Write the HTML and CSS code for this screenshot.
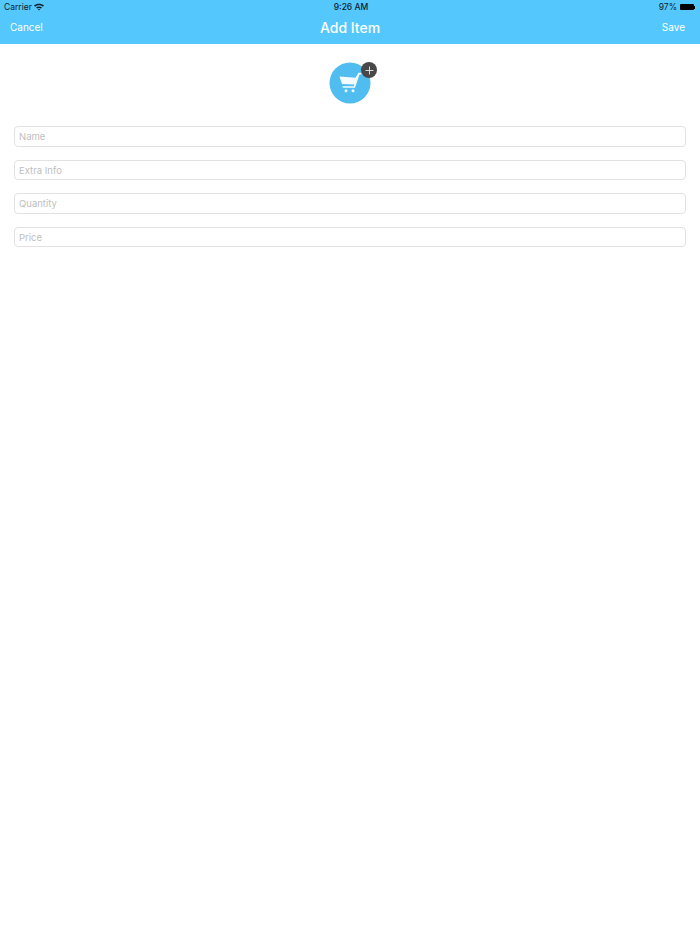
FILE: index.html
```html
<!DOCTYPE html>
<html lang="en">
<head>
    <meta charset="UTF-8">
    <meta name="viewport" content="width=device-width, initial-scale=1.0">
    <title>Add Item</title>
    <link rel="stylesheet" href="styles.css">
</head>
<body>

    <header class="barra">
        <div class="estado">
            <div class="estado-izq">
                <span>Carrier</span>
                <svg class="wifi" width="10" height="8" viewBox="0 0 10 8">
                    <path d="M0 2.6C2.8 0 7.2 0 10 2.6L8.9 3.8C6.7 1.8 3.3 1.8 1.1 3.8Z" fill="#10222c"/>
                    <path d="M2 4.5C3.7 3 6.3 3 8 4.5L6.9 5.6C5.8 4.7 4.2 4.7 3.1 5.6Z" fill="#10222c"/>
                    <path d="M3.9 6.3C4.6 5.8 5.4 5.8 6.1 6.3L5 7.6Z" fill="#10222c"/>
                </svg>
            </div>
            <div class="estado-hora">9:26 AM</div>
            <div class="estado-der">
                <span>97%</span>
                <div class="bateria"></div>
                <div class="bateria-punta"></div>
            </div>
        </div>
        <nav class="nav">
            <span class="nav-boton">Cancel</span>
            <h1 class="nav-titulo">Add Item</h1>
            <span class="nav-boton nav-boton-der">Save</span>
        </nav>
    </header>

    <main class="contenido">
        <div class="foto">
            <svg class="foto-icono" width="42" height="42" viewBox="0 0 42 42">
                <circle cx="21" cy="21" r="20.5" fill="#4fbdf0"/>
                <path d="M10.5 14.5L26.5 15.8L29.5 10.8H32.5V12.5H30.5L26 25.8H14L13.4 24.2H24.8L25.4 22.6L13 22Z" fill="#f4fbff"/>
                <circle cx="17" cy="28.7" r="1.5" fill="#f4fbff"/>
                <circle cx="24" cy="28.7" r="1.5" fill="#f4fbff"/>
            </svg>
            <div class="foto-mas">
                <svg width="9" height="9" viewBox="0 0 9 9">
                    <path d="M4.5 0.5V8.5M0.5 4.5H8.5" stroke="#e8e8e8" stroke-width="0.9"/>
                </svg>
            </div>
        </div>

        <form class="formulario">
            <div class="campo">Name</div>
            <div class="campo">Extra Info</div>
            <div class="campo">Quantity</div>
            <div class="campo">Price</div>
        </form>
    </main>

</body>
</html>
```

FILE: styles.css
```css
body {
    margin: 0;
    background-color: #fff;
    font-family: Inter, "Liberation Sans", sans-serif;
    min-height: 934px;
}

.barra {
    background-color: #54c7fc;
    height: 44px;
}

.estado {
    height: 14px;
    padding: 0 5px 0 4px;
    display: grid;
    grid-template-columns: 1fr auto 1fr;
    align-items: center;
    font-size: 8.5px;
    color: #10222c;
}

.estado-izq {
    display: flex;
    align-items: center;
    gap: 2px;
}

.estado-hora {
    margin-left: 3px;
    font-weight: 500;
}

.estado-der {
    display: flex;
    align-items: center;
    justify-content: flex-end;
}

.bateria {
    width: 14px;
    height: 6px;
    margin-left: 3px;
    background-color: #000;
    border-radius: 1px;
}

.bateria-punta {
    width: 1px;
    height: 3px;
    background-color: #000;
}

.nav {
    height: 30px;
    padding: 0 10px 4px;
    box-sizing: border-box;
    display: grid;
    grid-template-columns: 1fr auto 1fr;
    align-items: center;
    color: #fff;
}

.nav-boton {
    font-size: 10px;
}

.nav-boton-der {
    margin-right: 5px;
    text-align: right;
}

.nav-titulo {
    margin: 0;
    font-size: 14px;
    font-weight: 500;
}

.contenido {
    padding: 18px 14px 0;
}

.foto {
    position: relative;
    width: 42px;
    height: 42px;
    margin: 0 auto 22px;
}

.foto-icono {
    display: block;
}

.foto-mas {
    position: absolute;
    top: 0;
    right: -6px;
    width: 16px;
    height: 16px;
    border-radius: 50%;
    background-color: #484848;
    display: flex;
    align-items: center;
    justify-content: center;
}

.formulario {
    display: flex;
    flex-direction: column;
    gap: 13px;
}

.campo {
    height: 20.5px;
    box-sizing: border-box;
    padding-left: 4px;
    border: 1px solid #e2e2e2;
    border-radius: 4px;
    font-size: 9.5px;
    line-height: 19px;
    color: #c0c0c0;
}
```
